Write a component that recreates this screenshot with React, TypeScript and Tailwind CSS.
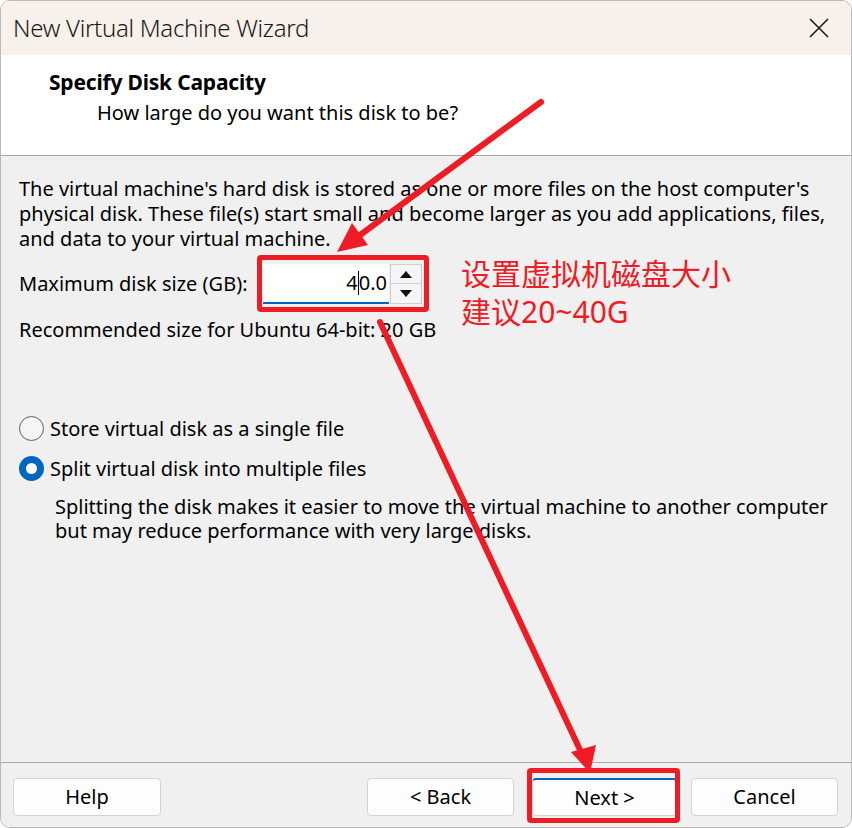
import React from 'react'

const font = { fontFamily: '"Noto Sans", "Noto Sans CJK SC", sans-serif' }

function Radio({ checked }: { checked?: boolean }) {
  if (checked) {
    return (
      <span className="w-[25px] h-[25px] rounded-full bg-[#0067c0] flex items-center justify-center shrink-0">
        <span className="w-[11px] h-[11px] rounded-full bg-white" />
      </span>
    )
  }
  return <span className="w-[25px] h-[25px] rounded-full border-[1.5px] border-[#5f5f5f] bg-[#f5f5f5] shrink-0" />
}

function Button({ label, primary, className = '' }: { label: string; primary?: boolean; className?: string }) {
  return (
    <button
      className={`h-[38px] rounded-[4px] bg-[#fdfdfd] border border-[#d3d3d3] text-[20px] text-black ${
        primary ? 'border-t-2 border-t-[#0067c0]' : ''
      } ${className}`}
    >
      {label}
    </button>
  )
}

export default function App() {
  return (
    <div className="relative w-[852px] h-[828px] bg-white overflow-hidden" style={font}>
      <div className="h-full flex flex-col rounded-[10px] border border-[#b9b9b9] overflow-hidden">
        {/* title bar */}
        <div className="h-[54px] shrink-0 bg-[#f8f0ea] flex items-center justify-between pl-[12px] pr-[22px]">
          <span className="text-[24px] font-light text-[#1a1a1a] tracking-[-0.3px]">New Virtual Machine Wizard</span>
          <svg width="20" height="20" viewBox="0 0 20 20">
            <path d="M1 1 L19 19 M19 1 L1 19" stroke="#1a1a1a" strokeWidth="1.6" />
          </svg>
        </div>

        {/* header */}
        <div className="h-[101px] shrink-0 bg-white border-b border-[#a9a9a9] pl-[48px] pt-[13px]">
          <div className="text-[21px] font-bold text-black leading-[28px] tracking-[-0.2px]">Specify Disk Capacity</div>
          <div className="text-[20px] text-black leading-[28px] mt-[3px] pl-[48px]">How large do you want this disk to be?</div>
        </div>

        {/* body */}
        <div className="flex-1 bg-[#f0f0f0] px-[18px] pt-[20px] text-[20px] text-black">
          <p className="leading-[25px]">
            The virtual machine's hard disk is stored as one or more files on the host computer's physical disk. These
            file(s) start small and become larger as you add applications, files, and data to your virtual machine.
          </p>

          <div className="relative flex items-center mt-[13px] h-[40px]">
            <span className="w-[244px]">Maximum disk size (GB):</span>
            <div className="flex h-[40px]">
              <div className="w-[126px] h-[40px] bg-white border-b-2 border-[#0067c0] flex items-center justify-end pr-[2px]">
                <span>4</span>
                <span className="w-px h-[24px] bg-black" />
                <span>0.0</span>
              </div>
              <div className="flex flex-col w-[32px] ml-px">
                <div className="h-[20px] border border-[#cfcfcf] bg-[#f5f5f5] flex items-center justify-center">
                  <svg width="12" height="7" viewBox="0 0 12 7"><path d="M6 0 L12 7 L0 7 Z" fill="#111" /></svg>
                </div>
                <div className="h-[20px] border border-t-0 border-[#cfcfcf] bg-[#f5f5f5] flex items-center justify-center">
                  <svg width="12" height="7" viewBox="0 0 12 7"><path d="M0 0 L12 0 L6 7 Z" fill="#111" /></svg>
                </div>
              </div>
            </div>
            {/* annotation */}
            <div className="absolute left-[442px] top-[-9px] text-[30px] leading-[38px] text-[#ee1c25]">
              <div>设置虚拟机磁盘大小</div>
              <div>建议20~40G</div>
            </div>
          </div>

          <p className="mt-[13px] leading-[25px]">Recommended size for Ubuntu 64-bit: 20 GB</p>

          <div className="mt-[74px] flex flex-col gap-[15px]">
            <label className="flex items-center gap-[6px] h-[25px]">
              <Radio />
              <span>Store virtual disk as a single file</span>
            </label>
            <label className="flex items-center gap-[6px] h-[25px]">
              <Radio checked />
              <span>Split virtual disk into multiple files</span>
            </label>
          </div>
          <p className="mt-[14px] pl-[36px] leading-[24px]">
            Splitting the disk makes it easier to move the virtual machine to another computer but may reduce
            performance with very large disks.
          </p>
        </div>

        {/* footer */}
        <div className="h-[65px] shrink-0 bg-[#f0f0f0] border-t border-[#a9a9a9] flex items-start pt-[15px] pl-[12px] pr-[13px]">
          <Button label="Help" className="w-[148px]" />
          <div className="flex-1" />
          <Button label="< Back" className="w-[147px]" />
          <Button label="Next >" primary className="w-[145px] ml-[18px]" />
          <Button label="Cancel" className="w-[147px] ml-[14px]" />
        </div>
      </div>

      {/* red highlight boxes */}
      <div className="absolute left-[257px] top-[255px] w-[172px] h-[57px] border-[5px] border-[#ee1c25] rounded-[4px] pointer-events-none" />
      <div className="absolute left-[527px] top-[768px] w-[153px] h-[55px] border-[5px] border-[#ee1c25] rounded-[4px] pointer-events-none" />

      {/* arrows */}
      <svg className="absolute inset-0 pointer-events-none" width="852" height="828" viewBox="0 0 852 828">
        <line x1="541" y1="102" x2="356" y2="238" stroke="#ee1c25" strokeWidth="6" strokeLinecap="round" />
        <path d="M337 252 L352 223 L368 245 Z" fill="#ee1c25" />
        <line x1="380" y1="322" x2="581" y2="752" stroke="#ee1c25" strokeWidth="6" strokeLinecap="round" />
        <path d="M590 773 L571 752 L596 745 Z" fill="#ee1c25" />
      </svg>
    </div>
  )
}
